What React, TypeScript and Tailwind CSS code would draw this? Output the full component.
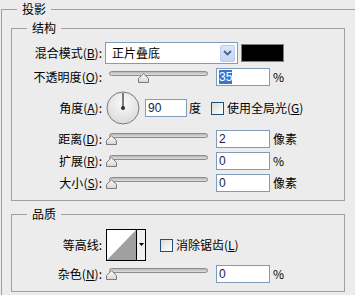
import React from 'react';

const BORDER = 'border-[#a0a0a0]';

function Label({ text, k }: { text: string; k?: string }) {
  return (
    <div className="w-[90px] shrink-0 text-right text-[12px] leading-[18px] text-black whitespace-nowrap">
      {text}
      {k && (
        <>
          (<span className="underline">{k}</span>)
        </>
      )}
      :
    </div>
  );
}

function Field({ value, selected }: { value: string; selected?: boolean }) {
  return (
    <div className="ml-[8px] w-[54px] h-[18px] shrink-0 border border-[#7f9db9] bg-white pl-[2px] text-[12px] leading-[16px] font-['Liberation_Sans',sans-serif]">
      {selected ? <span className="bg-[#3875d7] text-white">{value}</span> : <span className="text-[#1a1a4a]">{value}</span>}
    </div>
  );
}

function Slider({ pct }: { pct: number }) {
  return (
    <div className="relative ml-[7px] w-[99px] h-[18px] shrink-0">
      <div className="absolute left-0 right-0 top-[3px] h-[5px] rounded-full border border-[#8c8c8c] bg-gradient-to-b from-[#b8b8b8] to-[#dedede]" />
      <svg className="absolute top-[5px]" style={{ left: -3.5 + 93 * pct }} width="11" height="10" viewBox="0 0 11 10">
        <defs>
          <linearGradient id="thumb" x1="0" y1="0" x2="0" y2="1">
            <stop offset="0" stopColor="#ffffff" />
            <stop offset="1" stopColor="#d4d4d4" />
          </linearGradient>
        </defs>
        <path d="M0.5 9.5 V5.5 L5.5 0.8 L10.5 5.5 V9.5 Z" fill="url(#thumb)" stroke="#7a7a7a" strokeWidth="1" />
      </svg>
    </div>
  );
}

function Check() {
  return <div className="w-[13px] h-[13px] shrink-0 border border-[#1c5180] bg-gradient-to-br from-[#dcdcd7] to-white" />;
}

function Unit({ text }: { text: string }) {
  return <span className="ml-[3px] text-[12px] leading-[18px]">{text}</span>;
}

function Dial() {
  return (
    <svg className="ml-[4px] shrink-0" width="34" height="34" viewBox="0 0 34 34">
      <defs>
        <radialGradient id="dial" cx="0.5" cy="0.35" r="0.7">
          <stop offset="0" stopColor="#fafafa" />
          <stop offset="1" stopColor="#d8d8d8" />
        </radialGradient>
      </defs>
      <circle cx="17" cy="17" r="16" fill="url(#dial)" stroke="#7a7a7a" strokeWidth="1" />
      <line x1="17" y1="2" x2="17" y2="17" stroke="#3a3a3a" strokeWidth="1.3" />
      <circle cx="17" cy="17" r="2" fill="#333" />
    </svg>
  );
}

function Contour() {
  return (
    <svg className="ml-[4px] shrink-0" width="40" height="32" viewBox="0 0 40 32">
      <rect x="0.5" y="0.5" width="39" height="31" fill="#f0f0f0" stroke="#000" />
      <rect x="1" y="1" width="29" height="30" fill="#fff" />
      <polygon points="1,31 30,1 30,31" fill="#a0a0a0" />
      <line x1="30.5" y1="1" x2="30.5" y2="31" stroke="#000" />
      <polygon points="33,14 38,14 35.5,17" fill="#000" />
    </svg>
  );
}

function Group({ title, className, children }: { title: string; className: string; children: React.ReactNode }) {
  return (
    <div className={`relative border ${BORDER} ${className}`}>
      <span className="absolute left-[15px] top-[-10px] bg-[#ececec] px-[5px] text-[12px] leading-[18px]">{title}</span>
      {children}
    </div>
  );
}

export default function App() {
  return (
    <div className="w-[355px] h-[295px] overflow-hidden bg-[#ececec] pt-[9px] pl-[1px] text-black font-['Noto_Sans_CJK_SC',sans-serif]">
      <div className={`relative w-[400px] h-[320px] border-l border-t ${BORDER}`}>
        <span className="absolute left-[15px] top-[-10px] bg-[#ececec] px-[5px] text-[12px] leading-[18px]">投影</span>

        <Group title="结构" className="mt-[18px] ml-[9px] w-[334px] h-[173px]">
          {/* blend mode */}
          <div className="mt-[13px] flex h-[22px] items-center">
            <Label text="混合模式" k="B" />
            <div className="ml-[3px] flex h-[22px] w-[133px] shrink-0 items-center justify-between border border-[#7f9db9] bg-white pl-[6px] pr-[2px]">
              <span className="text-[12px] leading-[18px]">正片叠底</span>
              <div className="flex h-[17px] w-[15px] items-center justify-center rounded-[2px] border border-[#b9cdf2] bg-gradient-to-b from-[#dde7fb] to-[#c3d4f6]">
                <svg width="9" height="6" viewBox="0 0 9 6">
                  <path d="M1 1 L4.5 4.5 L8 1" fill="none" stroke="#4d6185" strokeWidth="1.8" />
                </svg>
              </div>
            </div>
            <div className="ml-[3px] h-[18px] w-[43px] shrink-0 border border-[#808080] bg-black" />
          </div>

          {/* opacity */}
          <div className="mt-[4px] flex h-[18px] items-center">
            <Label text="不透明度" k="O" />
            <Slider pct={0.35} />
            <Field value="35" selected />
            <Unit text="%" />
          </div>

          {/* angle */}
          <div className="mt-[5px] flex h-[34px] items-center">
            <Label text="角度" k="A" />
            <Dial />
            <div className="ml-[5px] h-[18px] w-[42px] shrink-0 border border-[#7f9db9] bg-white pl-[2px] text-[12px] leading-[16px] font-['Liberation_Sans',sans-serif] text-[#1a1a4a]">
              90
            </div>
            <span className="ml-[2px] text-[12px] leading-[18px]">度</span>
            <div className="ml-[10px]">
              <Check />
            </div>
            <span className="ml-[3px] text-[12px] leading-[18px] whitespace-nowrap">
              使用全局光(<span className="underline">G</span>)
            </span>
          </div>

          {/* distance */}
          <div className="mt-[5px] flex h-[18px] items-center">
            <Label text="距离" k="D" />
            <Slider pct={0} />
            <Field value="2" />
            <Unit text="像素" />
          </div>

          {/* spread */}
          <div className="mt-[4px] flex h-[18px] items-center">
            <Label text="扩展" k="R" />
            <Slider pct={0} />
            <Field value="0" />
            <Unit text="%" />
          </div>

          {/* size */}
          <div className="mt-[4px] flex h-[18px] items-center">
            <Label text="大小" k="S" />
            <Slider pct={0} />
            <Field value="0" />
            <Unit text="像素" />
          </div>
        </Group>

        <Group title="品质" className="mt-[13px] ml-[9px] w-[334px] h-[78px]">
          {/* contour */}
          <div className="mt-[14px] flex h-[32px] items-center">
            <Label text="等高线" />
            <Contour />
            <div className="ml-[14px]">
              <Check />
            </div>
            <span className="ml-[3px] text-[12px] leading-[18px] whitespace-nowrap">
              消除锯齿(<span className="underline">L</span>)
            </span>
          </div>

          {/* noise */}
          <div className="mt-[4px] flex h-[18px] items-center">
            <Label text="杂色" k="N" />
            <Slider pct={0} />
            <Field value="0" />
            <Unit text="%" />
          </div>
        </Group>
      </div>
    </div>
  );
}
